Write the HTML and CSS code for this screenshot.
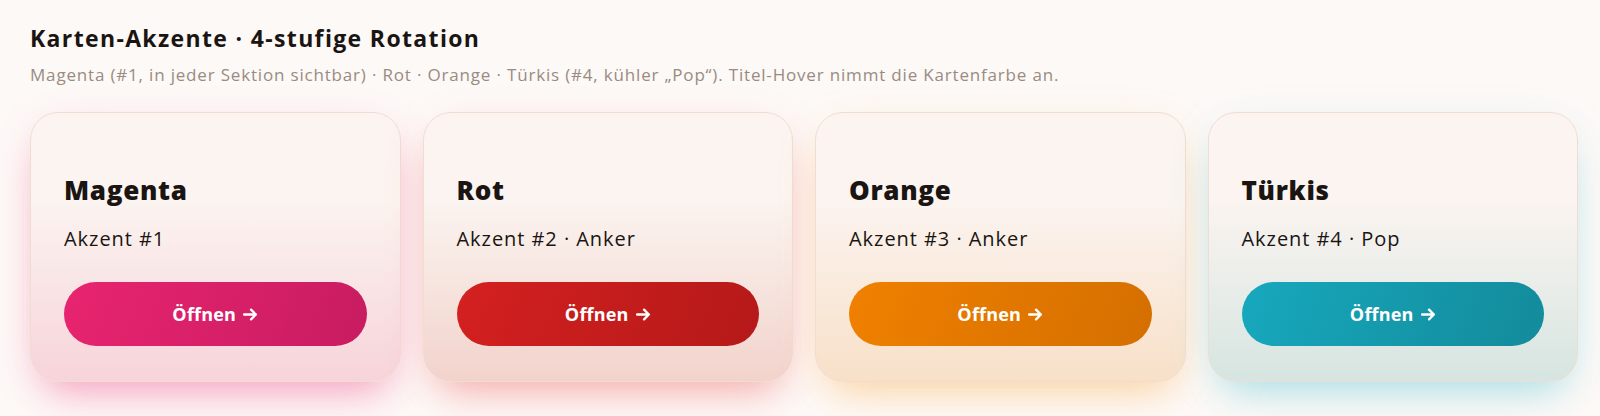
FILE: index.html
```html
<!DOCTYPE html>
<html lang="de">
<head>
  <meta charset="UTF-8" />
  <meta name="viewport" content="width=device-width, initial-scale=1.0"/>
  <title>Karten-Akzente</title>
  <link rel="stylesheet" href="styles.css">
</head>
<body>
  <section class="accents">
    <h2 class="accents-title">Karten-Akzente · 4-stufige Rotation</h2>
    <p class="accents-sub">Magenta (#1, in jeder Sektion sichtbar) · Rot · Orange · Türkis (#4, kühler „Pop“). Titel-Hover nimmt die Kartenfarbe an.</p>

    <div class="card-row">
      <div class="card card-magenta">
        <h3 class="card-title">Magenta</h3>
        <p class="card-text">Akzent #1</p>
        <button class="card-btn">Öffnen <svg class="arrow" viewBox="0 0 14 12"><path d="M1 6h11M7.5 1.5 12 6l-4.5 4.5"/></svg></button>
      </div>
      <div class="card card-red">
        <h3 class="card-title">Rot</h3>
        <p class="card-text">Akzent #2 · Anker</p>
        <button class="card-btn">Öffnen <svg class="arrow" viewBox="0 0 14 12"><path d="M1 6h11M7.5 1.5 12 6l-4.5 4.5"/></svg></button>
      </div>
      <div class="card card-orange">
        <h3 class="card-title">Orange</h3>
        <p class="card-text">Akzent #3 · Anker</p>
        <button class="card-btn">Öffnen <svg class="arrow" viewBox="0 0 14 12"><path d="M1 6h11M7.5 1.5 12 6l-4.5 4.5"/></svg></button>
      </div>
      <div class="card card-teal">
        <h3 class="card-title">Türkis</h3>
        <p class="card-text">Akzent #4 · Pop</p>
        <button class="card-btn">Öffnen <svg class="arrow" viewBox="0 0 14 12"><path d="M1 6h11M7.5 1.5 12 6l-4.5 4.5"/></svg></button>
      </div>
    </div>
  </section>
</body>
</html>
```

FILE: styles.css
```css
body {
  margin: 0;
  font-family: "Open Sans", "Noto Sans", sans-serif;
  background-color: #fdf9f7;
  color: #1a1512;
}
.accents {
  padding: 22px 22px 42px 30px;
}
.accents-title {
  margin: 0;
  font-size: 23px;
  font-weight: 700;
  line-height: 32px;
  letter-spacing: 1.35px;
}
.accents-sub {
  margin: 8px 0 0;
  font-size: 17px;
  line-height: 26px;
  color: #9a8b82;
  letter-spacing: 0.82px;
}
.card-row {
  display: grid;
  grid-template-columns: repeat(4, 1fr);
  gap: 22px;
  margin-top: 24px;
}
.card {
  --tint: #f7d4da;
  --glow: rgba(240, 60, 130, 0.3);
  border: 1px solid #f0ddd2;
  border-radius: 28px;
  padding: 61px 33px 35px;
  background: linear-gradient(180deg, #fbf4f0 32%, var(--tint) 100%);
  box-shadow: 0 24px 36px -16px var(--glow), 0 12px 48px -12px var(--glow);
}
.card-title {
  margin: 0;
  font-size: 26px;
  font-weight: 800;
  line-height: 32px;
  letter-spacing: 0.7px;
}
.card-text {
  margin: 19px 0 0;
  font-size: 20px;
  line-height: 28px;
  letter-spacing: 0.95px;
}
.card-btn {
  display: flex;
  align-items: center;
  justify-content: center;
  gap: 7px;
  width: 100%;
  height: 64px;
  margin-top: 29px;
  border: none;
  border-radius: 32px;
  font-family: inherit;
  font-size: 18px;
  font-weight: 700;
  letter-spacing: 0.2px;
  color: white;
  cursor: pointer;
}
.arrow {
  width: 15px;
  height: 13px;
  fill: none;
  stroke: white;
  stroke-width: 2.2;
  stroke-linecap: round;
  stroke-linejoin: round;
}
.card-magenta .card-btn {
  background: linear-gradient(110deg, #e8246f, #c81c60);
}
.card-red {
  --tint: #f2d3cc;
  --glow: rgba(230, 60, 60, 0.26);
}
.card-red .card-btn {
  background: linear-gradient(110deg, #d42020, #b51919);
}
.card-orange {
  --tint: #f8e0c8;
  --glow: rgba(250, 160, 50, 0.28);
}
.card-orange .card-btn {
  background: linear-gradient(110deg, #f08000, #d46f00);
}
.card-teal {
  --tint: #d6e5e1;
  --glow: rgba(60, 190, 210, 0.28);
}
.card-teal .card-btn {
  background: linear-gradient(110deg, #17a8bd, #138b9b);
}
```
